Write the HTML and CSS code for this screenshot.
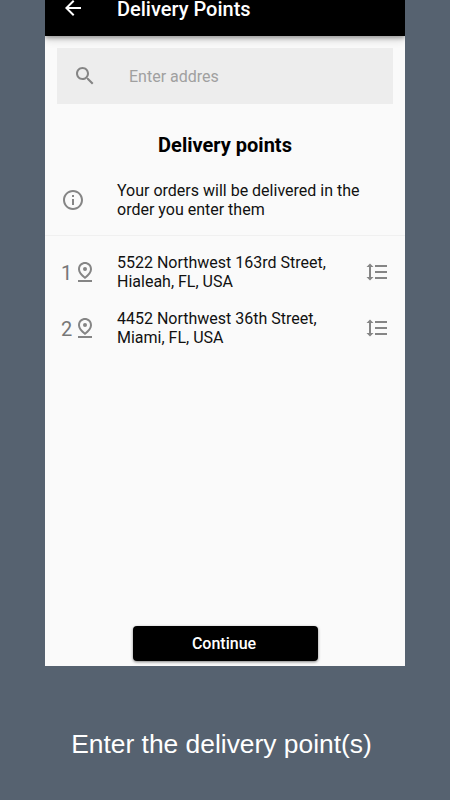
FILE: index.html
```html
<!DOCTYPE html>
<html lang="en">
<head>
  <meta charset="UTF-8">
  <title>Delivery Points</title>
  <meta name="viewport" content="width=device-width, initial-scale=1.0">
  <link rel="stylesheet" href="styles.css">
</head>
<body>
  <div class="phone">
    <header class="app-bar">
      <svg class="icon" viewBox="0 0 24 24"><path d="M20 11H7.83l5.59-5.59L12 4l-8 8 8 8 1.41-1.41L7.83 13H20v-2z"/></svg>
      <h1>Delivery Points</h1>
    </header>

    <main>
      <div class="search">
        <svg class="icon" viewBox="0 0 24 24"><path d="M15.5 14h-.79l-.28-.27C15.41 12.59 16 11.11 16 9.5 16 5.91 13.09 3 9.5 3S3 5.91 3 9.5 5.91 16 9.5 16c1.61 0 3.09-.59 4.23-1.57l.27.28v.79l5 4.99L20.49 19l-4.99-5zm-6 0C7.01 14 5 11.99 5 9.5S7.01 5 9.5 5 14 7.01 14 9.5 11.99 14 9.5 14z"/></svg>
        <input type="text" placeholder="Enter addres">
      </div>

      <h2>Delivery points</h2>

      <div class="row info">
        <div class="lead">
          <svg class="icon" viewBox="0 0 24 24"><path d="M11 7h2v2h-2zm0 4h2v6h-2zm1-9C6.48 2 2 6.48 2 12s4.48 10 10 10 10-4.48 10-10S17.52 2 12 2zm0 18c-4.41 0-8-3.59-8-8s3.59-8 8-8 8 3.59 8 8-3.59 8-8 8z"/></svg>
        </div>
        <p>Your orders will be delivered in the<br>order you enter them</p>
      </div>

      <div class="points">
        <div class="row">
          <div class="lead">
            <span>1</span>
            <svg class="icon" viewBox="0 0 24 24"><path d="M12 4c1.93 0 5 1.4 5 5.15 0 2.16-1.72 4.67-5 7.32-3.28-2.65-5-5.17-5-7.32C7 5.4 10.07 4 12 4m0-2C8.73 2 5 4.46 5 9.15c0 3.12 2.33 6.41 7 9.85 4.67-3.44 7-6.73 7-9.85C19 4.46 15.27 2 12 2z"/><circle cx="12" cy="9" r="2"/><path d="M5 20h14v2H5z"/></svg>
          </div>
          <p>5522 Northwest 163rd Street,<br>Hialeah, FL, USA</p>
          <svg class="icon" viewBox="0 0 24 24"><path d="M6 7h2.5L5 3.5 1.5 7H4v10H1.5L5 20.5 8.5 17H6V7zm4-2v2h12V5H10zm0 14h12v-2H10v2zm0-6h12v-2H10v2z"/></svg>
        </div>
        <div class="row">
          <div class="lead">
            <span>2</span>
            <svg class="icon" viewBox="0 0 24 24"><path d="M12 4c1.93 0 5 1.4 5 5.15 0 2.16-1.72 4.67-5 7.32-3.28-2.65-5-5.17-5-7.32C7 5.4 10.07 4 12 4m0-2C8.73 2 5 4.46 5 9.15c0 3.12 2.33 6.41 7 9.85 4.67-3.44 7-6.73 7-9.85C19 4.46 15.27 2 12 2z"/><circle cx="12" cy="9" r="2"/><path d="M5 20h14v2H5z"/></svg>
          </div>
          <p>4452 Northwest 36th Street,<br>Miami, FL, USA</p>
          <svg class="icon" viewBox="0 0 24 24"><path d="M6 7h2.5L5 3.5 1.5 7H4v10H1.5L5 20.5 8.5 17H6V7zm4-2v2h12V5H10zm0 14h12v-2H10v2zm0-6h12v-2H10v2z"/></svg>
        </div>
      </div>

      <button class="continue">Continue</button>
    </main>
  </div>

  <p class="caption">Enter the delivery point(s)</p>
</body>
</html>
```
FILE: styles.css
```css
* {
  box-sizing: border-box;
}

body {
  margin: 0;
  height: 800px;
  background: #566270;
  font-family: Roboto, sans-serif;
  overflow: hidden;
}

h1, h2, p {
  margin: 0;
}

.phone {
  display: flex;
  flex-direction: column;
  width: 360px;
  height: 666px;
  margin: 0 auto;
  background: #fafafa;
  overflow: hidden;
}

.icon {
  flex: none;
  width: 24px;
  height: 24px;
  fill: #858585;
}

.app-bar {
  display: flex;
  align-items: flex-start;
  gap: 32px;
  flex: none;
  height: 36px;
  padding: 0 16px;
  background: #000;
  color: #fff;
  box-shadow: 0 2px 4px rgba(0,0,0,0.3), 0 4px 8px rgba(0,0,0,0.14);
}

/* top of the bar runs off the screen */
.app-bar .icon {
  margin-top: -4px;
  fill: #fff;
}

.app-bar h1 {
  font-size: 20px;
  font-weight: 500;
  line-height: 19px;
}

main {
  display: flex;
  flex-direction: column;
  flex: 1;
  padding: 12px 0 5px;
}

.search {
  display: flex;
  align-items: center;
  gap: 32px;
  height: 56px;
  margin: 0 12px;
  padding: 0 16px;
  background: #ededed;
}

.search input {
  flex: 1;
  min-width: 0;
  padding: 0;
  border: none;
  outline: none;
  background: none;
  font: 16px Roboto, sans-serif;
}

.search input::placeholder {
  color: #a0a0a0;
}

h2 {
  margin-top: 29px;
  font-size: 20px;
  font-weight: 700;
  line-height: 24px;
  text-align: center;
}

.row {
  display: flex;
  align-items: center;
  height: 56px;
  padding: 0 16px;
  font-size: 16px;
  line-height: 19px;
  color: #111;
}

.row p {
  flex: 1;
}

.lead {
  display: flex;
  align-items: center;
  width: 56px;
  font-size: 20px;
  color: #777;
}

.lead span {
  width: 12px;
  padding-top: 2px;
}

.info {
  height: 79px;
  padding-top: 7px;
  border-bottom: 1px solid #f0f0f0;
}

.points {
  padding-top: 8px;
}

.continue {
  width: 185px;
  height: 35px;
  margin: auto auto 0;
  padding: 0 2px 0 0;
  border: none;
  border-radius: 4px;
  background: #000;
  color: #fff;
  font: 500 16px Roboto, sans-serif;
  box-shadow: 0 1px 3px rgba(0,0,0,0.5);
}

.caption {
  margin: 63px 7px 0 0;
  font-family: "Liberation Sans", Arial, sans-serif;
  font-size: 26.4px;
  line-height: 31px;
  text-align: center;
  color: #fff;
}
```
